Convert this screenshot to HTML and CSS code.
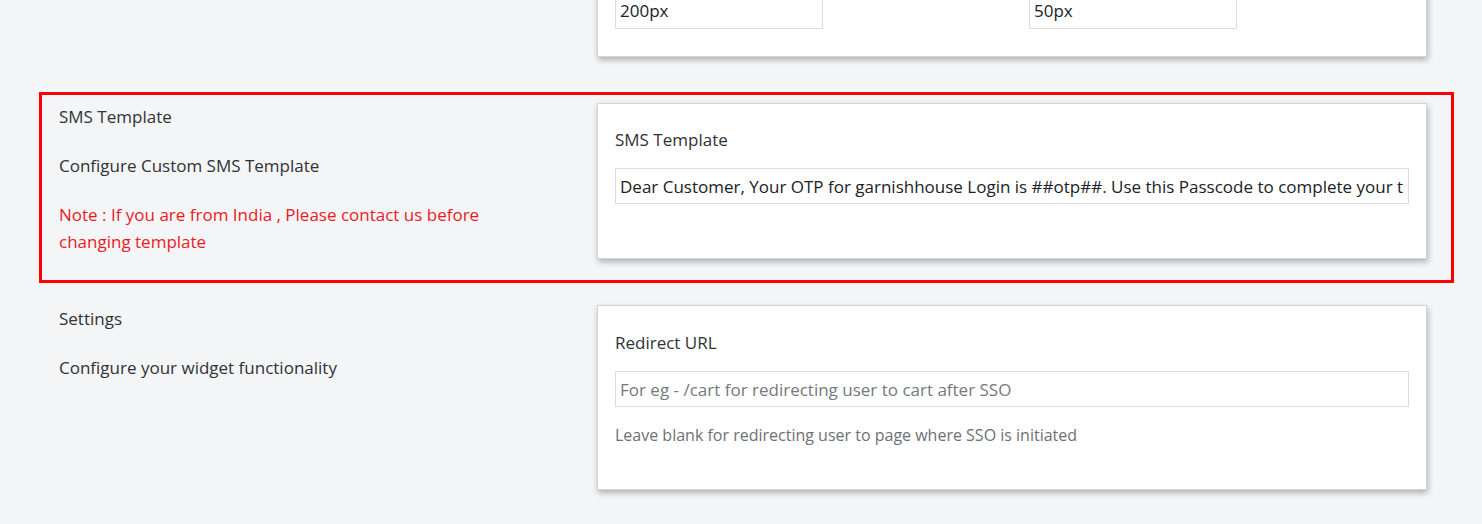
FILE: index.html
```html
<!DOCTYPE html>
<html>
<head>
<meta charset="utf-8">
<link rel="stylesheet" href="styles.css">
</head>
<body>
<div class="page">
  <section class="row row-top">
    <div class="side"></div>
    <div class="card card-top">
      <div class="pair">
        <input class="field field-small" type="text" value="200px">
        <input class="field field-small" type="text" value="50px">
      </div>
    </div>
  </section>

  <section class="row row-highlight">
    <div class="side">
      <p class="side-title">SMS Template</p>
      <p class="side-desc">Configure Custom SMS Template</p>
      <p class="side-note">Note : If you are from India , Please contact us before changing template</p>
    </div>
    <div class="card">
      <label class="label">SMS Template</label>
      <input class="field" type="text" value="Dear Customer, Your OTP for garnishhouse Login is ##otp##. Use this Passcode to complete your transaction. Thank you.">
    </div>
  </section>

  <section class="row row-last">
    <div class="side">
      <p class="side-title">Settings</p>
      <p class="side-desc">Configure your widget functionality</p>
    </div>
    <div class="card card-settings">
      <label class="label">Redirect URL</label>
      <input class="field" type="text" placeholder="For eg - /cart for redirecting user to cart after SSO">
      <p class="help">Leave blank for redirecting user to page where SSO is initiated</p>
    </div>
  </section>
</div>
</body>
</html>
```

FILE: styles.css
```css
html, body {
  margin: 0;
  padding: 0;
  background: #f4f5f7;
  font-family: "Open Sans", "Noto Sans", sans-serif;
  color: #303236;
  font-size: 17px;
  overflow: hidden;
}

.page {
  margin-left: 42px;
  width: 1409px;
}

.row {
  display: flex;
  padding: 8px 24px 21px 17px;
  margin-bottom: 15px;
  box-sizing: border-box;
}

.row-top {
  margin-top: -42px;
  margin-bottom: 17px;
}

.row-highlight {
  outline: 3px solid #ff0000;
  margin-bottom: 17px;
}

.side {
  width: 538px;
  flex: none;
}

.side p {
  margin: 0;
  line-height: 27px;
}

.side-desc {
  margin-top: 22px !important;
}

.side-note {
  margin-top: 22px !important;
  color: #ec1a1f;
  width: 440px;
}

.card {
  width: 830px;
  box-sizing: border-box;
  background: #fff;
  border: 1px solid #d4d5d7;
  box-shadow: 1px 3px 6px rgba(0, 0, 0, 0.28);
  padding: 24px 17px 54px;
  display: flex;
  flex-direction: column;
}

.card-top {
  padding: 24px 17px 27px;
}

.pair {
  display: flex;
  gap: 206px;
}

.label {
  display: block;
  line-height: 24px;
  margin-bottom: 16px;
}

.field {
  display: block;
  box-sizing: border-box;
  width: 100%;
  height: 36px;
  border: 1px solid #dcdcdc;
  padding: 0 4px;
  font-family: inherit;
  font-size: 17px;
  color: #202226;
  background: #fff;
  outline: none;
}

.field::placeholder {
  color: #76797e;
}

.field-small {
  width: 208px;
  height: 38px;
}

.help {
  margin: 15px 0 0;
  font-size: 16px;
  line-height: 26px;
  color: #6d7075;
}

.card-settings {
  padding-top: 25px;
  padding-bottom: 41px;
}
```
